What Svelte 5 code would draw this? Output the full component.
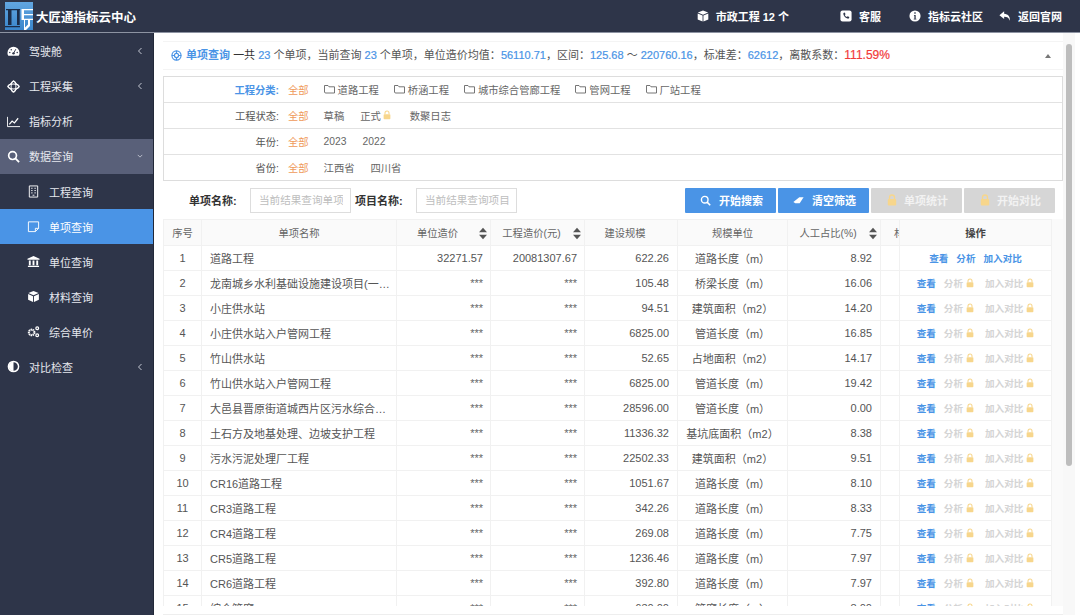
<script>
  const menu = [
    { key: 'gauge', label: '驾驶舱', arrow: 'left' },
    { key: 'cube3d', label: '工程采集', arrow: 'left' },
    { key: 'chart', label: '指标分析' },
    { key: 'search', label: '数据查询', arrow: 'down', open: true },
    { key: 'building', label: '工程查询', sub: true },
    { key: 'note', label: '单项查询', sub: true, active: true },
    { key: 'bank', label: '单位查询', sub: true },
    { key: 'box', label: '材料查询', sub: true },
    { key: 'cogs', label: '综合单价', sub: true },
    { key: 'half', label: '对比检查', arrow: 'left' }
  ];

  const filters = [
    { label: '工程分类:', hot: true, items: ['道路工程', '桥涵工程', '城市综合管廊工程', '管网工程', '厂站工程'], folder: true },
    { label: '工程状态:', items: ['草稿', '正式', '数聚日志'], lockOn: '正式' },
    { label: '年份:', items: ['2023', '2022'] },
    { label: '省份:', items: ['江西省', '四川省'] }
  ];

  const rows = [
    ['道路工程', '32271.57', '20081307.67', '622.26', '道路长度（m）', '8.92'],
    ['龙南城乡水利基础设施建设项目(一…', '***', '***', '105.48', '桥梁长度（m）', '16.06'],
    ['小庄供水站', '***', '***', '94.51', '建筑面积（m2）', '14.20'],
    ['小庄供水站入户管网工程', '***', '***', '6825.00', '管道长度（m）', '16.85'],
    ['竹山供水站', '***', '***', '52.65', '占地面积（m2）', '14.17'],
    ['竹山供水站入户管网工程', '***', '***', '6825.00', '管道长度（m）', '19.42'],
    ['大邑县晋原街道城西片区污水综合…', '***', '***', '28596.00', '管道长度（m）', '0.00'],
    ['土石方及地基处理、边坡支护工程', '***', '***', '11336.32', '基坑底面积（m2）', '8.38'],
    ['污水污泥处理厂工程', '***', '***', '22502.33', '建筑面积（m2）', '9.51'],
    ['CR16道路工程', '***', '***', '1051.67', '道路长度（m）', '8.10'],
    ['CR3道路工程', '***', '***', '342.26', '道路长度（m）', '8.33'],
    ['CR4道路工程', '***', '***', '269.08', '道路长度（m）', '7.75'],
    ['CR5道路工程', '***', '***', '1236.46', '道路长度（m）', '7.97'],
    ['CR6道路工程', '***', '***', '392.80', '道路长度（m）', '7.97'],
    ['综合管廊', '***', '***', '630.00', '管廊长度（m）', '8.00']
  ];
</script>

{#snippet lock(cls)}
  <svg class={'lock ' + cls} viewBox="0 0 10 12">
    <path d="M2.5 5V3.5a2.5 2.5 0 0 1 5 0V5" fill="none" stroke="currentColor" stroke-width="1.3" />
    <rect x="0.8" y="5" width="8.4" height="6.4" rx="1" fill="currentColor" />
  </svg>
{/snippet}

{#snippet sortIcon()}
  <svg class="sort" viewBox="0 0 9 13"><path d="M4.5 0 9 5H0zM4.5 13 0 8h9z" fill="#555" /></svg>
{/snippet}

{#snippet menuIcon(key)}
  <svg class="micon" viewBox="0 0 14 14" fill="#fff">
    {#if key === 'gauge'}
      <path d="M7 2a6.5 6.5 0 0 0-6.5 6.5c0 1.2.3 2.3.9 3.2h11.2c.6-.9.9-2 .9-3.2A6.5 6.5 0 0 0 7 2z" />
      <circle cx="7" cy="9" r="1.3" fill="#2e3549" /><path d="M7 9 9.5 4.5" stroke="#2e3549" stroke-width="1" />
      <circle cx="3" cy="8" r=".8" fill="#2e3549" /><circle cx="4.6" cy="5" r=".8" fill="#2e3549" /><circle cx="11" cy="8" r=".8" fill="#2e3549" />
    {:else if key === 'cube3d'}
      <g fill="none" stroke="#fff" stroke-width="1.1"><path d="M7 1 13 7 7 13 1 7z" /><ellipse cx="7" cy="7" rx="6" ry="2.6" /><ellipse cx="7" cy="7" rx="2.6" ry="6" /></g>
    {:else if key === 'chart'}
      <path d="M.5 2v10.5H14" fill="none" stroke="#fff" stroke-width="1" /><path d="M2.5 10 5.5 6.5l2.5 2 4-5" fill="none" stroke="#fff" stroke-width="1.3" />
    {:else if key === 'search'}
      <circle cx="6" cy="6" r="4.2" fill="none" stroke="#fff" stroke-width="1.8" /><path d="m9 9 4 4" stroke="#fff" stroke-width="2" />
    {:else if key === 'building'}
      <path d="M2.5 1h9v12h-9z" fill="none" stroke="#fff" stroke-width="1" /><path d="M4.5 3.5H6M8 3.5h1.5M4.5 6H6M8 6h1.5M4.5 8.5H6M8 8.5h1.5M6 11h2" stroke="#fff" stroke-width="1" />
    {:else if key === 'note'}
      <path d="M1.5 2h11v7L9 12.500H1.500zM12.500 9H9v3.500" fill="none" stroke="#fff" stroke-width="1" />
    {:else if key === 'bank'}
      <path d="M7 1 13.500 4v1H.5V4zM2 6h2v5H2zM6 6h2v5H6zM10 6h2v5h-2zM1 11.500h12V13H1z" />
    {:else if key === 'box'}
      <path d="M7 1 12.500 3.300 7 5.600 1.500 3.300zM1.200 4.300 6.500 6.600V13L1.200 10.500zM12.800 4.300 7.500 6.600V13l5.300-2.500z" />
    {:else if key === 'cogs'}
      <circle cx="5" cy="8" r="3" fill="none" stroke="#fff" stroke-width="2.2" stroke-dasharray="1.5 .6" /><circle cx="11" cy="3.500" r="1.500" fill="none" stroke="#fff" stroke-width="1.3" /><circle cx="11" cy="11" r="1.500" fill="none" stroke="#fff" stroke-width="1.3" />
    {:else if key === 'half'}
      <circle cx="7" cy="7" r="5.500" fill="none" stroke="#fff" stroke-width="1.6" /><path d="M7 2a5 5 0 0 0 0 10z" />
    {/if}
  </svg>
{/snippet}

<div class="page">
  <header class="topbar">
    <div class="brand">
      <svg class="logo" viewBox="0 0 28 28">
        <defs><linearGradient id="lg" x1="0" y1="0" x2="0" y2="1"><stop offset="0" stop-color="#62a6e0" /><stop offset="1" stop-color="#3a86cc" /></linearGradient></defs>
        <rect width="28" height="28" fill="url(#lg)" />
        <path d="M1 7h14v1.300H1zM3 8.300h3.500V23H3zM12 8.300h2.700V23H12zM0 24h15v1.300H0z" fill="#1b2c48" />
        <path d="M16.500 7H28v1.300H19v3.700h9v1.200h-9v3.600h9v1.200h-3v6l-5 5h-1v-11h-2.500zM20 18.000v7.500l3-3v-4.500z" fill="#fff" fill-rule="evenodd" />
      </svg>
      <span>大匠通指标云中心</span>
    </div>
    <nav class="topnav">
      <span class="nav-item cube">
        <svg viewBox="0 0 14 14" fill="#fff"><path d="M7 .5 13 3 7 5.500 1 3zM.8 4 6.500 6.400V13.500L.8 11zM13.200 4 7.500 6.400V13.500l5.700-2.500z" /></svg>
        市政工程 12 个
      </span>
      <span class="nav-item">
        <svg viewBox="0 0 14 14"><rect x=".5" y=".5" width="13" height="13" rx="2.500" fill="#fff" /><path d="M4 3.500 5.500 3l1 2-1 .8c.5 1 1.300 1.900 2.500 2.500l.9-1 2 1-.5 1.700c-3.500.5-7-3.500-6.400-6.500z" fill="#2e3549" /></svg>
        客服
      </span>
      <span class="nav-item">
        <svg viewBox="0 0 14 14"><circle cx="7" cy="7" r="6.500" fill="#fff" /><path d="M5.800 5.800h2v4.400h.8v1H5.500v-1h.8V6.800h-.5zM6.200 2.600h1.600v1.800H6.200z" fill="#2e3549" /></svg>
        指标云社区
      </span>
      <span class="nav-item back">
        <svg viewBox="0 0 14 14" fill="#fff"><path d="M6 1.500.5 6 6 10.500V7.800c3.500 0 5.500 1 6.500 4.700.8-4.500-1.500-8-6.500-8.200z" /></svg>
        返回官网
      </span>
    </nav>
  </header>

  <div class="body">
    <aside class="sidebar">
      {#each menu as m}
        <div class="menu-item" class:sub={m.sub} class:open={m.open} class:active={m.active}>
          {@render menuIcon(m.key)}
          <span class="menu-label">{m.label}</span>
          {#if m.arrow === 'left'}
            <svg class="arrow" viewBox="0 0 6 8"><path d="M4.500 1 1.500 4l3 3" fill="none" stroke="#c5c9d4" stroke-width="1" /></svg>
          {:else if m.arrow === 'down'}
            <svg class="arrow" viewBox="0 0 8 6"><path d="M1 1.500 4 4.500l3-3" fill="none" stroke="#d5d8e0" stroke-width="1" /></svg>
          {/if}
        </div>
      {/each}
    </aside>

    <main class="content">
      <div class="inner">
        <section class="summary">
          <svg class="ring" viewBox="0 0 14 14" fill="none" stroke="#4a94e6" stroke-width="1.500"><circle cx="7" cy="7" r="5.800" /><circle cx="7" cy="7" r="2.600" /><path d="M7 1v3M7 10v3M1 7h3M10 7h3" /></svg>
          <span class="blue">单项查询</span> <span class="dark">一共</span> <b class="num">23</b> 个单项，当前查询 <b class="num">23</b> 个单项，单位造价均值：<b class="num">56110.71</b>，区间：<b class="num">125.68</b> ～ <b class="num">220760.16</b>，标准差：<b class="num">62612</b>，离散系数：<b class="red">111.59%</b>
          <span class="caret"></span>
        </section>

        <section class="filters">
          {#each filters as f}
            <div class="filter-row">
              <span class="filter-label" class:hot={f.hot}>{f.label}</span>
              <span class="all">全部</span>
              <div class="filter-items" class:wide={f.folder}>
                {#each f.items as item}
                  <span class="filter-item">
                    {#if f.folder}
                      <svg class="folder" viewBox="0 0 11 10"><path d="M.5 8V1.500H4l1 1.300h5.500V9H1.200z" fill="none" stroke="#666" stroke-width=".9" /></svg>
                    {/if}
                    {item}
                    {#if item === f.lockOn}{@render lock('lock-small')}{/if}
                  </span>
                {/each}
              </div>
            </div>
          {/each}
        </section>

        <section class="searchbar">
          <label class="field first"><b>单项名称:</b><input placeholder="当前结果查询单项名称" /></label>
          <label class="field"><b>项目名称:</b><input placeholder="当前结果查询项目名称" /></label>
          <div class="actions">
            <button class="btn">
              <svg viewBox="0 0 14 14"><circle cx="6" cy="6" r="4.200" fill="none" stroke="#fff" stroke-width="1.8" /><path d="m9 9 4 4" stroke="#fff" stroke-width="2" /></svg>
              开始搜索
            </button>
            <button class="btn">
              <svg viewBox="0 0 14 14" fill="#fff"><path d="M8 3h5.500L8.500 10.500H3L.5 9z" /></svg>
              清空筛选
            </button>
            <button class="btn off">{@render lock('lock-btn')}单项统计</button>
            <button class="btn off">{@render lock('lock-btn')}开始对比</button>
          </div>
        </section>

        <section class="table-wrap">
          <table>
            <colgroup>
              <col style="width:38px" /><col style="width:195px" /><col style="width:94px" /><col style="width:94px" /><col style="width:93px" /><col style="width:110px" /><col style="width:93px" /><col style="width:19px" /><col style="width:152px" />
            </colgroup>
            <thead>
              <tr>
                <th>序号</th>
                <th>单项名称</th>
                <th class="sortable"><span>单位造价</span>{@render sortIcon()}</th>
                <th class="sortable"><span>工程造价(元)</span>{@render sortIcon()}</th>
                <th class="sortable">建设规模</th>
                <th>规模单位</th>
                <th class="sortable"><span>人工占比(%)</span>{@render sortIcon()}</th>
                <th class="clip">材料占比</th>
                <th class="ops-head">操作</th>
              </tr>
            </thead>
            <tbody>
              {#each rows as r, i}
                <tr>
                  <td class="center">{i + 1}</td>
                  <td class="name">{r[0]}</td>
                  <td class="right cost" class:stars={r[1] === '***'}>{r[1]}</td>
                  <td class="right cost" class:stars={r[2] === '***'}>{r[2]}</td>
                  <td class="right">{r[3]}</td>
                  <td class="center">{r[4]}</td>
                  <td class="right">{r[5]}</td>
                  <td></td>
                  <td class="ops">
                    <div class="op-row">
                      {#if i === 0}
                        <span class="link">查看</span><span class="link">分析</span><span class="link">加入对比</span>
                      {:else}
                        <span class="link">查看</span>
                        <span class="mute">分析{@render lock('lock-op')}</span>
                        <span class="mute far">加入对比{@render lock('lock-op')}</span>
                      {/if}
                    </div>
                  </td>
                </tr>
              {/each}
            </tbody>
          </table>
          <div class="table-scroll"></div>
        </section>
      </div>
      <div class="page-scroll"><div class="thumb"></div></div>
    </main>
  </div>
</div>

<style>
  :global(body) {
    margin: 0;
    font-family: "Liberation Sans", "Noto Sans CJK SC", sans-serif;
    font-size: 11px;
    color: #555;
  }

  .page {
    width: 1080px;
    height: 615px;
    overflow: hidden;
    display: flex;
    flex-direction: column;
    background: #fff;
  }

  .topbar {
    height: 32px;
    flex: none;
    background: #2e3549;
    border-bottom: 1px solid #8d93a2;
    display: flex;
    align-items: center;
    justify-content: space-between;
    color: #fff;
  }

  .brand {
    display: flex;
    align-items: center;
    gap: 3px;
    padding-left: 5px;
    font-size: 12.5px;
    font-weight: 700;
  }

  .logo {
    width: 28px;
    height: 28px;
  }

  .topnav {
    display: flex;
    font-weight: 700;
    padding-right: 18px;
  }

  .nav-item {
    display: flex;
    align-items: center;
    gap: 7px;
    margin-left: 28px;
  }

  .nav-item.cube {
    margin-right: 23px;
  }

  .nav-item.back {
    margin-left: 16px;
  }

  .nav-item svg {
    width: 12px;
    height: 12px;
  }

  .body {
    flex: 1;
    display: flex;
    min-height: 0;
  }

  .sidebar {
    width: 154px;
    flex: none;
    background: #2e3549;
    box-sizing: border-box;
    padding-top: .6px;
    border-right: 1px solid #222838;
  }

  .menu-item {
    height: 35.1px;
    display: flex;
    align-items: center;
    padding-left: 7px;
    color: #e6e8ee;
    position: relative;
  }

  .menu-item.sub {
    padding-left: 27px;
  }

  .menu-item.open {
    background: #596079;
  }

  .menu-item.active {
    background: #4a94e6;
    color: #fff;
  }

  .micon {
    width: 13px;
    height: 13px;
    flex: none;
  }

  .menu-label {
    margin-left: 9px;
  }

  .arrow {
    position: absolute;
    right: 10px;
    width: 6px;
    height: 8px;
  }

  .content {
    flex: 1;
    display: flex;
    min-width: 0;
  }

  .inner {
    width: 900px;
    margin-left: 9px;
    flex: none;
    padding-top: 8px;
    display: flex;
    flex-direction: column;
    border-bottom: 1px solid #eee;
    box-sizing: border-box;
  }

  .summary {
    height: 27px;
    line-height: 27px;
    flex: none;
    white-space: nowrap;
    padding-left: 8px;
    color: #555;
    border-top: 1px solid #f4f4f4;
    border-bottom: 1px solid #f4f4f4;
    position: relative;
  }

  .ring {
    width: 11px;
    height: 11px;
    vertical-align: -2px;
    margin-right: 1px;
  }

  .blue {
    color: #4a94e6;
    font-weight: 700;
  }

  .num {
    color: #4a94e6;
    font-weight: 400;
    -webkit-text-stroke: .2px #4a94e6;
  }

  .dark {
    color: #333;
  }

  .red {
    color: #f23b3b;
    font-size: 12px;
    font-weight: 400;
    -webkit-text-stroke: .2px #f23b3b;
  }

  .caret {
    position: absolute;
    right: 12px;
    top: 12px;
    border-left: 3.5px solid transparent;
    border-right: 3.5px solid transparent;
    border-bottom: 4px solid #777;
  }

  .filters {
    flex: none;
    margin-top: 6px;
    border: 1px solid #ddd;
    font-size: 10.3px;
  }

  .filter-row {
    height: 26px;
    box-sizing: border-box;
    padding-bottom: 1px;
    display: flex;
    align-items: center;
    border-bottom: 1px solid #e2e2e2;
  }

  .filter-row:last-child {
    height: 25px;
    border-bottom: 0;
  }

  .filter-label {
    width: 115px;
    text-align: right;
    flex: none;
  }

  .filter-label.hot {
    color: #4a94e6;
    font-weight: 700;
  }

  .all {
    color: #ef9a5a;
    margin-left: 9px;
  }

  .filter-items {
    display: flex;
    gap: 16px;
    margin-left: 15px;
  }

  .filter-items.wide {
    gap: 15px;
  }

  .filter-item {
    display: flex;
    align-items: center;
    color: #666;
  }

  .folder {
    width: 11px;
    height: 10px;
    margin-right: 3px;
  }

  .lock {
    color: #f7d68c;
  }

  .lock-small {
    width: 8px;
    height: 10px;
    margin: 0 3px 0 2px;
  }

  .searchbar {
    flex: none;
    height: 38px;
    display: flex;
    align-items: center;
  }

  .field {
    display: flex;
    align-items: center;
    color: #333;
  }

  .field.first {
    margin-left: 26px;
  }

  .field b {
    width: 61px;
    flex: none;
  }

  .field input {
    width: 101px;
    height: 25px;
    box-sizing: border-box;
    border: 1px solid #ddd;
    padding: 0 7px 0 8px;
    font: inherit;
    font-size: 10.6px;
    margin-right: 4px;
  }

  .field input::placeholder {
    color: #bdbdbd;
  }

  .actions {
    display: flex;
    gap: 2px;
    margin-left: auto;
    margin-right: 8px;
  }

  .btn {
    width: 91px;
    height: 25px;
    border: 0;
    border-radius: 1px;
    background: #4a94e6;
    color: #fff;
    font: inherit;
    font-weight: 700;
    display: flex;
    align-items: center;
    justify-content: center;
    gap: 8px;
    padding: 0 0 0 2px;
  }

  .btn svg {
    width: 11px;
    height: 11px;
  }

  .btn.off {
    background: #d6d6d6;
    color: #f2f2f2;
    gap: 7px;
  }

  .btn .lock-btn {
    width: 10px;
    height: 12px;
  }

  .table-wrap {
    position: relative;
    flex: none;
    height: 387px;
    overflow: hidden;
  }

  table {
    width: 888px;
    table-layout: fixed;
    border-collapse: collapse;
  }

  th, td {
    height: 25px;
    box-sizing: border-box;
    padding: 0 8px;
    border: 1px solid #f1f1f1;
    border-top: 0;
    font-weight: 400;
    white-space: nowrap;
    overflow: hidden;
  }

  th {
    background: #fafafa;
    height: 26px;
    border-top: 1px solid #f1f1f1;
    text-align: center;
    color: #666;
    font-size: 10.3px;
  }

  tbody tr {
    color: #555;
  }

  .center {
    text-align: center;
  }

  .right {
    text-align: right;
  }

  td.cost {
    padding-right: 7px;
  }

  .stars {
    color: #666;
  }

  th.sortable {
    position: relative;
    padding: 0 12px 0 0;
  }

  .sort {
    position: absolute;
    right: 3px;
    top: 7px;
    width: 8px;
    height: 13px;
  }

  th.clip {
    padding: 0 0 0 13px;
    text-align: left;
  }

  .ops-head {
    font-weight: 700;
    color: #444;
  }

  .ops {
    font-size: 9.6px;
    padding: 0;
    font-weight: 700;
  }

  .op-row {
    display: flex;
    justify-content: center;
    align-items: center;
    gap: 8px;
  }

  .link {
    color: #4a94e6;
  }

  .mute {
    color: #d4d4d4;
    display: flex;
    align-items: center;
  }

  .mute.far {
    margin-left: 3px;
  }

  .lock-op {
    width: 8px;
    height: 10px;
    margin-left: 3px;
  }

  .table-scroll {
    position: absolute;
    top: 0;
    bottom: 0;
    left: 888px;
    width: 12px;
    background: #fafafa;
    border-left: 1px solid #f1f1f1;
    box-sizing: border-box;
  }

  .page-scroll {
    width: 12px;
    flex: none;
    background: #f8f8f8;
    padding-top: 11px;
    box-sizing: border-box;
  }

  .thumb {
    width: 6px;
    height: 422px;
    margin-left: 3px;
    background: #bdbdbd;
    border-radius: 3px;
  }
</style>
